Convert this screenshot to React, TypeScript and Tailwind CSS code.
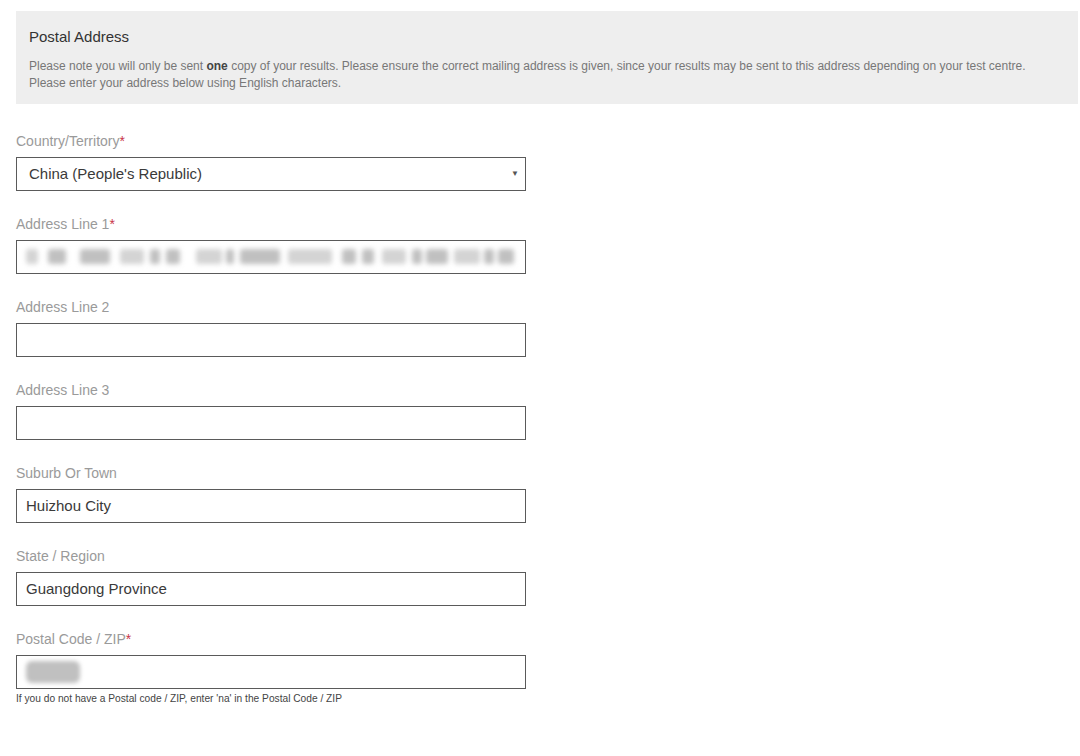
const fields = [
  { label: 'Address Line 2', value: '' },
  { label: 'Address Line 3', value: '' },
  { label: 'Suburb Or Town', value: 'Huizhou City' },
  { label: 'State / Region', value: 'Guangdong Province' },
];

function Label({ text, required }: { text: string; required?: boolean }) {
  return (
    <div className="text-[14px] leading-[16px] text-[#9a9a9a] mb-[8px]">
      {text}
      {required && <span className="text-[#c8334a]">*</span>}
    </div>
  );
}

function Box({ children }: { children?: React.ReactNode }) {
  return (
    <div className="h-[34px] w-[510px] border border-[#5a5a5a] bg-white flex items-center pl-[9px] pr-[8px] text-[15px] text-[#3a3a3a]">
      {children}
    </div>
  );
}

// redacted text: blurred grey blocks
const blurBlocks = [
  [0, 12], [22, 18], [54, 30], [94, 24], [124, 10], [140, 14], [170, 26], [200, 8], [214, 40], [262, 44], [316, 14], [336, 12], [356, 24], [386, 10], [400, 22], [428, 26], [458, 10], [472, 16],
];

export default function App() {
  return (
    <div className="w-[1080px] h-[756px] bg-white pt-[11px] pl-[16px] font-['Liberation_Sans',Arial,sans-serif]">
      <div className="w-[1062px] h-[93px] bg-[#eeeeee] pt-[17px] pl-[13px]">
        <h2 className="text-[15px] leading-[18px] text-[#333]">Postal Address</h2>
        <p className="mt-[12px] text-[12px] leading-[17px] text-[#777]">
          Please note you will only be sent <b className="text-[#444]">one</b> copy of your results. Please ensure the correct mailing address is given, since your results may be sent to this address depending on your test centre.
          <br />
          Please enter your address below using English characters.
        </p>
      </div>

      <div className="mt-[29px] flex flex-col gap-[25px]">
        <div>
          <Label text="Country/Territory" required />
          <div className="h-[34px] w-[510px] border border-[#5a5a5a] bg-white flex items-center justify-between pl-[12px] pr-[6px] text-[15px] text-[#3a3a3a]">
            <span>China (People's Republic)</span>
            <span className="text-[8px] text-[#555]">▼</span>
          </div>
        </div>

        <div>
          <Label text="Address Line 1" required />
          <Box>
            <div className="relative h-[22px] w-[490px] blur-[2.5px]">
              {blurBlocks.map(([x, w], i) => (
                <div
                  key={i}
                  className="absolute top-[3px] h-[15px] bg-[#b0b0b0] rounded-[3px]"
                  style={{ left: x, width: w, opacity: i % 3 === 0 ? 0.55 : 0.8 }}
                />
              ))}
            </div>
          </Box>
        </div>

        {fields.map((f) => (
          <div key={f.label}>
            <Label text={f.label} />
            <Box>{f.value}</Box>
          </div>
        ))}

        <div>
          <Label text="Postal Code / ZIP" required />
          <Box>
            <div className="h-[22px] w-[54px] rounded-[6px] bg-[#c0c0c0] blur-[2px]" />
          </Box>
          <div className="mt-[4px] text-[10.2px] leading-[12px] text-[#444]">
            If you do not have a Postal code / ZIP, enter 'na' in the Postal Code / ZIP
          </div>
        </div>
      </div>
    </div>
  );
}
